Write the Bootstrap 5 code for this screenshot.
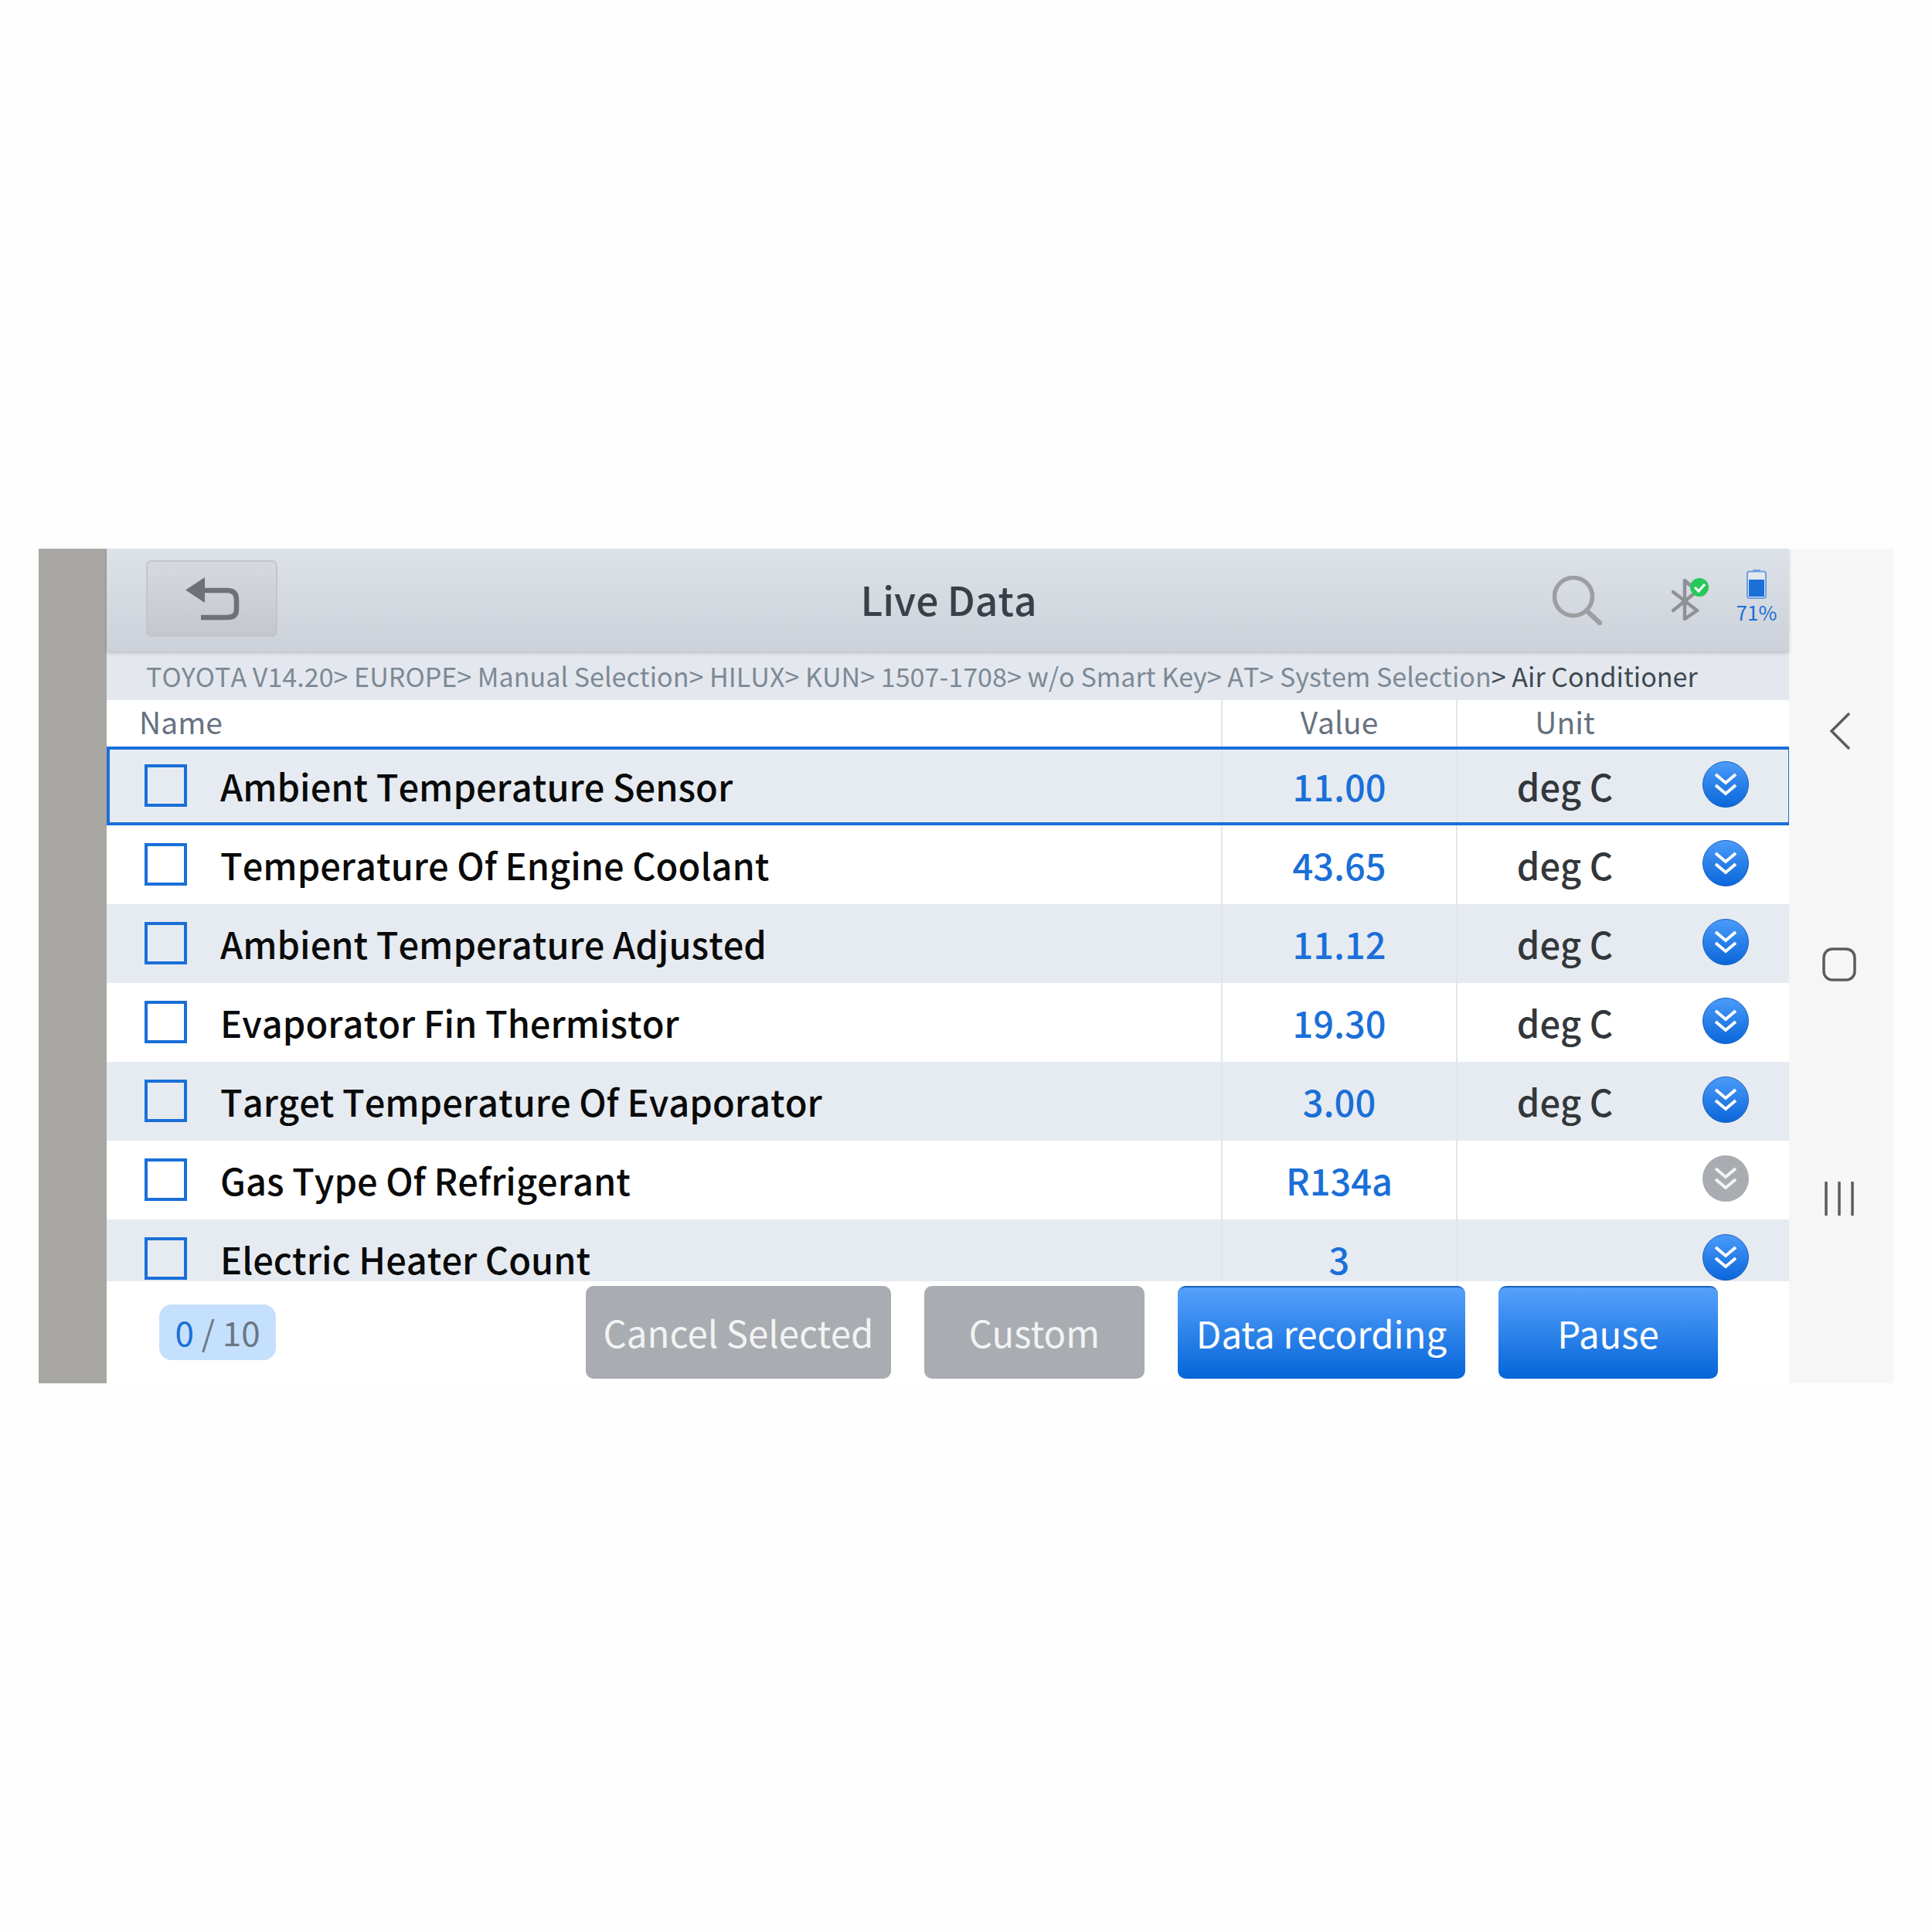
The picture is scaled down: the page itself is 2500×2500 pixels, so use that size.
<!DOCTYPE html>
<html lang="en">
<head>
<meta charset="utf-8">
<title>Live Data</title>
<link rel="stylesheet" href="https://cdn.jsdelivr.net/npm/bootstrap@5.3.0/dist/css/bootstrap.min.css">
<style>
html,body{background:#fefefe;margin:0}
body{font-family:"Noto Sans CJK SC","Noto Sans",sans-serif;height:2500px;font-kerning:none}
.shell{margin:710px 50px 0 50px;height:1080px}
.side-strip{width:88px;background:#a8a7a3;flex:none}
.main-pane{width:2177px;flex:none;background:#fff}
.nav-strip{width:135px;background:#f6f6f6;flex:none}
.top-bar{height:133px;background:linear-gradient(#dde1e8,#cdd1d9);display:grid;grid-template-columns:1fr auto 1fr;align-items:center;box-shadow:0 2px 4px rgba(0,0,0,.18);position:relative}
.back-btn{width:170px;height:99px;margin-left:51px;margin-top:-4px;padding:0;border:2px solid #c2c6cc;border-radius:7px;background:linear-gradient(#d6dae0,#c4c8ce)}
.page-title{font-size:51.500px;color:#3a4047;line-height:1;margin:0;font-weight:500;transform:translateX(1px) translateY(-2px)}
.tools{padding-right:16px}
.bt-icon{margin-left:90px;margin-right:36px;margin-top:-2px}
.batt-box{width:52px;margin-top:-8px}
.batt-icon{margin-top:-3px;margin-bottom:3px;display:block}
.batt-pct{font-size:26px;line-height:28px;color:#1a6fd8}
.crumbs{height:63px;background:#e4e8ee;padding-left:51px;font-size:34.080px;line-height:62px;color:#7d8995;white-space:nowrap}
.crumbs b{font-weight:400;color:#3f4852}
.head-row{height:60px;font-size:39px;line-height:55px;color:#667280}
.cell-name{width:1442px;flex:none}
.cell-val{width:304px;flex:none;border-left:2px solid #e2e5e9;color:#1a6fd8}
.cell-unit{width:280px;flex:none;border-left:2px solid #e2e5e9;color:#33373b}
.head-name{padding-left:42px}
.head-cell{text-align:center;color:#667280}
.data-scroll{height:692px;overflow:hidden}
.data-row{height:102px;font-size:47px;line-height:58px;font-weight:500;position:relative}
.data-row:nth-child(odd){background:#e6ebf1}
.data-row.is-active::after{content:"";position:absolute;left:0;right:0;top:0;bottom:0;border:solid #1a6fd8;border-width:4px 1px 4px 4px;pointer-events:none}
.tick-box{width:55px;height:55px;border:4px solid #1a6fd8;margin-left:49px;margin-right:43px;margin-top:-2px;flex:none}
.name-text{color:#0a0a0a;white-space:nowrap}
.more-btn{margin-left:39px;margin-top:-5px;flex:none;display:block;align-self:center}
.foot-bar{height:132px;padding-right:92px;padding-top:6px}
.count-pill{width:151px;height:72px;margin-left:68px;margin-top:24px;border-radius:16px;background:#c5e0fc;font-size:44px;line-height:70px;text-align:center;color:#6b7785}
.count-pill span{color:#1a6fd8}
.act-btn{height:120px;border-radius:10px;font-size:47.400px;line-height:1;padding:0;color:#fff;border:0}
.act-grey,.act-grey:hover{background:#a9acb0;color:#f2f3f4}
.act-blue,.act-blue:hover{background:linear-gradient(#56a1fc,#0565d8);border-top:2px solid #1a62c0;color:#fff}
.w-cancel{width:395px}.w-custom{width:285px}.w-record{width:372px}.w-pause{width:284px}
.btn-gap{gap:43px}
.nav-back{margin-top:212px;margin-left:52px}
.nav-home{margin-top:256px;margin-left:43px}
.nav-recent{margin-top:259px;margin-left:45px}
</style>
</head>
<body>
<div class="shell d-flex">
  <div class="side-strip"></div>
  <div class="main-pane d-flex flex-column">
    <div class="top-bar">
      <div>
        <button class="back-btn btn d-flex align-items-center justify-content-center" type="button" aria-label="Back">
          <svg width="72" height="56" viewBox="0 0 72 56"><path d="M27 1V34L2 17.500Z" fill="#6e7175" transform="translate(0 -1)"/><path d="M24 17H56Q68 17 68 29V42Q68 52 56 52H22" fill="none" stroke="#6e7175" stroke-width="6.500"/></svg>
        </button>
      </div>
      <h1 class="page-title">Live Data</h1>
      <div class="tools d-flex justify-content-end align-items-center">
        <svg width="64" height="64" viewBox="0 0 64 64"><circle cx="27" cy="27" r="24.500" fill="none" stroke="#9c9ea1" stroke-width="5.500"/><path d="M44 45L61 61" stroke="#9c9ea1" stroke-width="6.500" stroke-linecap="round"/></svg>
        <svg class="bt-icon" width="48" height="56" viewBox="0 0 48 56"><path d="M2 18L33 42L17 53V3L33 17L2 42" fill="none" stroke="#8e9296" stroke-width="4.500" stroke-linejoin="round" stroke-linecap="round"/><circle cx="36" cy="12" r="12" fill="#27c95a"/><path d="M30 12L35 17L43 8" fill="none" stroke="#fff" stroke-width="3"/></svg>
        <div class="batt-box d-flex flex-column align-items-center">
          <svg class="batt-icon" width="26" height="38" viewBox="0 0 26 38"><rect x="8" y="0" width="10" height="3" rx="1" fill="#6d9fe0"/><rect x="1" y="2.500" width="24" height="34.500" rx="3" fill="#e4e9f0" stroke="#6d9fe0" stroke-width="2"/><rect x="3" y="13" width="20" height="22" fill="#1a6fd8"/></svg>
          <div class="batt-pct">71%</div>
        </div>
      </div>
    </div>
    <div class="crumbs">TOYOTA V14.20&gt; EUROPE&gt; Manual Selection&gt; HILUX&gt; KUN&gt; 1507-1708&gt; w/o Smart Key&gt; AT&gt; System Selection<b>&gt; Air Conditioner</b></div>
    <div class="head-row d-flex">
      <div class="cell-name head-name">Name</div>
      <div class="cell-val head-cell">Value</div>
      <div class="cell-unit head-cell">Unit</div>
    </div>
    <div class="data-scroll">
      <div class="data-row is-active d-flex">
        <div class="cell-name d-flex align-items-center"><span class="tick-box"></span><span class="name-text">Ambient Temperature Sensor</span></div>
        <div class="cell-val d-flex align-items-center justify-content-center">11.00</div><div class="cell-unit d-flex align-items-center justify-content-center">deg C</div>
        <svg class="more-btn" width="60" height="60" viewBox="0 0 60 60"><defs><linearGradient id="gb" x1="0" y1="0" x2="0" y2="1"><stop offset="0" stop-color="#4b9bfa"/><stop offset="1" stop-color="#0a66d9"/></linearGradient></defs><circle cx="30" cy="30" r="29.500" fill="url(#gb)" stroke="#1a62c0"/><path d="M17 17L30 28L43 17M17 31L30 42L43 31" fill="none" stroke="#fff" stroke-width="4"/></svg>
      </div>
      <div class="data-row d-flex">
        <div class="cell-name d-flex align-items-center"><span class="tick-box"></span><span class="name-text">Temperature Of Engine Coolant</span></div>
        <div class="cell-val d-flex align-items-center justify-content-center">43.65</div><div class="cell-unit d-flex align-items-center justify-content-center">deg C</div>
        <svg class="more-btn" width="60" height="60" viewBox="0 0 60 60"><circle cx="30" cy="30" r="29.500" fill="url(#gb)" stroke="#1a62c0"/><path d="M17 17L30 28L43 17M17 31L30 42L43 31" fill="none" stroke="#fff" stroke-width="4"/></svg>
      </div>
      <div class="data-row d-flex">
        <div class="cell-name d-flex align-items-center"><span class="tick-box"></span><span class="name-text">Ambient Temperature Adjusted</span></div>
        <div class="cell-val d-flex align-items-center justify-content-center">11.12</div><div class="cell-unit d-flex align-items-center justify-content-center">deg C</div>
        <svg class="more-btn" width="60" height="60" viewBox="0 0 60 60"><circle cx="30" cy="30" r="29.500" fill="url(#gb)" stroke="#1a62c0"/><path d="M17 17L30 28L43 17M17 31L30 42L43 31" fill="none" stroke="#fff" stroke-width="4"/></svg>
      </div>
      <div class="data-row d-flex">
        <div class="cell-name d-flex align-items-center"><span class="tick-box"></span><span class="name-text">Evaporator Fin Thermistor</span></div>
        <div class="cell-val d-flex align-items-center justify-content-center">19.30</div><div class="cell-unit d-flex align-items-center justify-content-center">deg C</div>
        <svg class="more-btn" width="60" height="60" viewBox="0 0 60 60"><circle cx="30" cy="30" r="29.500" fill="url(#gb)" stroke="#1a62c0"/><path d="M17 17L30 28L43 17M17 31L30 42L43 31" fill="none" stroke="#fff" stroke-width="4"/></svg>
      </div>
      <div class="data-row d-flex">
        <div class="cell-name d-flex align-items-center"><span class="tick-box"></span><span class="name-text">Target Temperature Of Evaporator</span></div>
        <div class="cell-val d-flex align-items-center justify-content-center">3.00</div><div class="cell-unit d-flex align-items-center justify-content-center">deg C</div>
        <svg class="more-btn" width="60" height="60" viewBox="0 0 60 60"><circle cx="30" cy="30" r="29.500" fill="url(#gb)" stroke="#1a62c0"/><path d="M17 17L30 28L43 17M17 31L30 42L43 31" fill="none" stroke="#fff" stroke-width="4"/></svg>
      </div>
      <div class="data-row d-flex">
        <div class="cell-name d-flex align-items-center"><span class="tick-box"></span><span class="name-text">Gas Type Of Refrigerant</span></div>
        <div class="cell-val d-flex align-items-center justify-content-center">R134a</div><div class="cell-unit"></div>
        <svg class="more-btn" width="60" height="60" viewBox="0 0 60 60"><circle cx="30" cy="30" r="30" fill="#a9acb0"/><path d="M17 17L30 28L43 17M17 31L30 42L43 31" fill="none" stroke="#f4f4f5" stroke-width="4"/></svg>
      </div>
      <div class="data-row d-flex">
        <div class="cell-name d-flex align-items-center"><span class="tick-box"></span><span class="name-text">Electric Heater Count</span></div>
        <div class="cell-val d-flex align-items-center justify-content-center">3</div><div class="cell-unit"></div>
        <svg class="more-btn" width="60" height="60" viewBox="0 0 60 60"><circle cx="30" cy="30" r="29.500" fill="url(#gb)" stroke="#1a62c0"/><path d="M17 17L30 28L43 17M17 31L30 42L43 31" fill="none" stroke="#fff" stroke-width="4"/></svg>
      </div>
    </div>
    <div class="foot-bar d-flex align-items-start">
      <div class="count-pill"><span>0</span> / 10</div>
      <div class="d-flex btn-gap ms-auto">
        <button class="btn act-btn act-grey w-cancel" type="button">Cancel Selected</button>
        <button class="btn act-btn act-grey w-custom" type="button">Custom</button>
        <button class="btn act-btn act-blue w-record" type="button">Data recording</button>
        <button class="btn act-btn act-blue w-pause" type="button">Pause</button>
      </div>
    </div>
  </div>
  <div class="nav-strip d-flex flex-column">
    <svg class="nav-back" width="28" height="48" viewBox="0 0 28 48"><path d="M25 2L3 24L25 46" fill="none" stroke="#5c5c5c" stroke-width="3.500" stroke-linecap="round"/></svg>
    <svg class="nav-home" width="44" height="44" viewBox="0 0 44 44"><rect x="2" y="2" width="40" height="40" rx="11" fill="none" stroke="#5c5c5c" stroke-width="3.500"/></svg>
    <svg class="nav-recent" width="40" height="44" viewBox="0 0 40 44"><path d="M3 1V43M20 1V43M37 1V43" stroke="#5c5c5c" stroke-width="3.500" stroke-linecap="round"/></svg>
  </div>
</div>
<script src="https://cdn.jsdelivr.net/npm/bootstrap@5.3.0/dist/js/bootstrap.bundle.min.js"></script>
</body>
</html>
